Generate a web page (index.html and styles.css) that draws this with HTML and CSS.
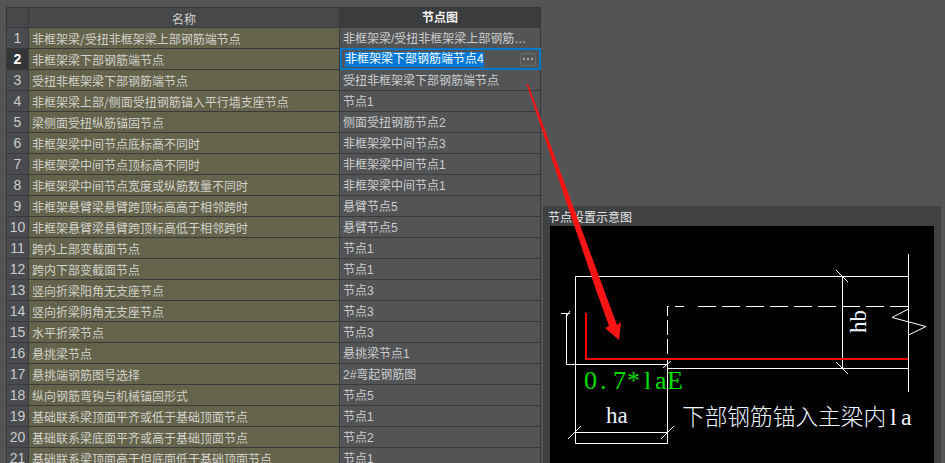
FILE: index.html
```html
<!DOCTYPE html>
<html lang="zh">
<head>
<meta charset="utf-8">
<title>节点设置</title>
<link rel="stylesheet" href="styles.css">
</head>
<body>
<div class="page">
  <div class="grid">
    <div class="row head"><div class="num"></div><div class="name">名称</div><div class="node">节点图</div></div>
    <div class="row"><div class="num">1</div><div class="name">非框架梁/受扭非框架梁上部钢筋端节点</div><div class="node">非框架梁/受扭非框架梁上部钢筋端节点</div></div>
    <div class="row current"><div class="num">2</div><div class="name">非框架梁下部钢筋端节点</div><div class="node editing"><span class="selected">非框架梁下部钢筋端节点4</span><span class="more"><i></i><i></i><i></i></span></div></div>
    <div class="row"><div class="num">3</div><div class="name">受扭非框架梁下部钢筋端节点</div><div class="node">受扭非框架梁下部钢筋端节点</div></div>
    <div class="row"><div class="num">4</div><div class="name">非框架梁上部/侧面受扭钢筋锚入平行墙支座节点</div><div class="node">节点1</div></div>
    <div class="row"><div class="num">5</div><div class="name">梁侧面受扭纵筋锚固节点</div><div class="node">侧面受扭钢筋节点2</div></div>
    <div class="row"><div class="num">6</div><div class="name">非框架梁中间节点底标高不同时</div><div class="node">非框架梁中间节点3</div></div>
    <div class="row"><div class="num">7</div><div class="name">非框架梁中间节点顶标高不同时</div><div class="node">非框架梁中间节点1</div></div>
    <div class="row"><div class="num">8</div><div class="name">非框架梁中间节点宽度或纵筋数量不同时</div><div class="node">非框架梁中间节点1</div></div>
    <div class="row"><div class="num">9</div><div class="name">非框架悬臂梁悬臂跨顶标高高于相邻跨时</div><div class="node">悬臂节点5</div></div>
    <div class="row"><div class="num">10</div><div class="name">非框架悬臂梁悬臂跨顶标高低于相邻跨时</div><div class="node">悬臂节点5</div></div>
    <div class="row"><div class="num">11</div><div class="name">跨内上部变截面节点</div><div class="node">节点1</div></div>
    <div class="row"><div class="num">12</div><div class="name">跨内下部变截面节点</div><div class="node">节点1</div></div>
    <div class="row"><div class="num">13</div><div class="name">竖向折梁阳角无支座节点</div><div class="node">节点3</div></div>
    <div class="row"><div class="num">14</div><div class="name">竖向折梁阴角无支座节点</div><div class="node">节点3</div></div>
    <div class="row"><div class="num">15</div><div class="name">水平折梁节点</div><div class="node">节点3</div></div>
    <div class="row"><div class="num">16</div><div class="name">悬挑梁节点</div><div class="node">悬挑梁节点1</div></div>
    <div class="row"><div class="num">17</div><div class="name">悬挑端钢筋图号选择</div><div class="node">2#弯起钢筋图</div></div>
    <div class="row"><div class="num">18</div><div class="name">纵向钢筋弯钩与机械锚固形式</div><div class="node">节点5</div></div>
    <div class="row"><div class="num">19</div><div class="name">基础联系梁顶面平齐或低于基础顶面节点</div><div class="node">节点1</div></div>
    <div class="row"><div class="num">20</div><div class="name">基础联系梁底面平齐或高于基础顶面节点</div><div class="node">节点2</div></div>
    <div class="row"><div class="num">21</div><div class="name">基础联系梁顶面高于但底面低于基础顶面节点</div><div class="node">节点1</div></div>
  </div>
  <aside class="panel">
    <div class="panel-title">节点设置示意图</div>
    <svg class="drawing" viewBox="550 226 384 237" width="384" height="237">
      <g class="wire">
        <path d="M575.5 276.5H908.5M908.5 254V392M575.5 276.5V443.5H667.5V364M575.5 432.5H667.5M667.5 368.5H908.5M842.5 276.5V368.5"/>
        <path d="M667 306.5H669M675 306.5H684M667.5 306V316M667.5 320V335M667.5 339V354M667.5 358V364"/>
        <path class="dash" d="M698 306.5H908"/>
        <path d="M566.5 313V364.5H667.5M561 313.5H570"/>
        <path d="M836 270L848 282M836 362L848 374M568 439L581 426M661 439L674 426M663 368L671 361M566 317L570 311"/>
        <path d="M908.5 309L892 317.5L926 326.5L908.5 335"/>
      </g>
      <path class="rebar" d="M586 313V359H908"/>
      <text class="serif-label" transform="translate(866 333) rotate(-90)">hb</text>
      <text class="green" x="584 600 613 627 644 655 667" y="389">0.7*laE</text>
      <text class="serif-label" x="606" y="423">ha</text>
      <text class="note" x="682" y="425">下部钢筋锚入主梁内<tspan class="note-latin" x="890 901">la</tspan></text>
    </svg>
  </aside>
</div>
<svg class="arrow" viewBox="0 0 945 463" width="945" height="463"><polygon points="526.5,84 528,84 604,290 617,325 621,322 619,340 605,328 609,326 596,290"/></svg>
</body>
</html>
```

FILE: styles.css
```css
* { box-sizing: border-box; }
html, body { margin: 0; height: 463px; overflow: hidden; background: #535456; }
body { font-family: "Noto Sans CJK SC", "Liberation Sans", sans-serif; font-size: 12px; color: #cfcfcf; }

.page { display: flex; align-items: flex-start; padding-top: 7px; padding-left: 6px; height: 463px; position: relative; }

.grid { width: 535px; flex: none; border-top: 1px solid #39393b; border-left: 1px solid #39393b; border-right: 1px solid #39393b; min-height: 470px; }
.row { display: grid; grid-template-columns: 22px 311px 200px; height: 21px; line-height: 22px; }
.row > div { border-bottom: 1px solid #3a3a3c; white-space: nowrap; overflow: hidden; }
.num { background: #4a4b4e; border-right: 1px solid #3a3a3c; text-align: center; font-family: "Liberation Sans", sans-serif; font-size: 14px; line-height: 20px; color: #c9cbce; }
.name { background: #64634b; border-right: 1px solid #3a3a3c; padding-left: 3px; color: #d2d2cc; }
.node { background: #535456; padding-left: 3px; padding-right: 10px; text-overflow: ellipsis; color: #cdcdcd; font-family: "Liberation Sans", "Noto Sans CJK SC", sans-serif; }

.head { height: 20px; line-height: 21px; }
.head .num, .head .name { background: #47484a; text-align: center; padding: 0; }
.head .node { background: #3b3c3e; text-align: center; padding: 0; font-weight: 700; color: #f2f2f2; }

.current .num { background: #343537; color: #fff; font-weight: 700; }

.row > .editing { display: flex; align-items: center; justify-content: space-between; border: 2px solid #0078c8; margin: -1px -1px 0 0; height: 22px; padding: 0 3px 0 3px; overflow: hidden; }
.selected { background: #0078d7; color: #fff; height: 15px; line-height: 15px; padding: 0; }
.more { display: flex; justify-content: center; align-items: center; gap: 2px; width: 16px; height: 13px; border: 1px solid #6b6c6e; border-radius: 2px; }
.more i { width: 2px; height: 2px; background: #a5a5a5; }

.panel { width: 398px; flex: none; margin: 199px 0 0 2px; background: #404143; padding: 0 7px 0 5px; height: 300px; }
.panel-title { height: 20px; line-height: 22px; color: #e6e6e6; white-space: nowrap; }
.drawing { display: block; margin-left: 2px; background: #000; }

.wire { fill: none; stroke: #fff; stroke-width: 1; }
.dash { stroke-dasharray: 18 6; }
.rebar { fill: none; stroke: #f00; stroke-width: 2; }
.serif-label, .green, .note-latin { font-family: "Liberation Serif", serif; }
.serif-label { font-size: 23px; fill: #eef6ff; }
.green { font-size: 26px; fill: #00e000; }
.note { font-family: "Noto Sans CJK SC", sans-serif; font-size: 22.7px; font-weight: 300; fill: #eef6ff; }
.note-latin { font-family: "Liberation Serif", serif; font-size: 24px; }

.arrow { position: absolute; left: 0; top: 0; pointer-events: none; }
.arrow polygon { fill: #fb1414; }
```
